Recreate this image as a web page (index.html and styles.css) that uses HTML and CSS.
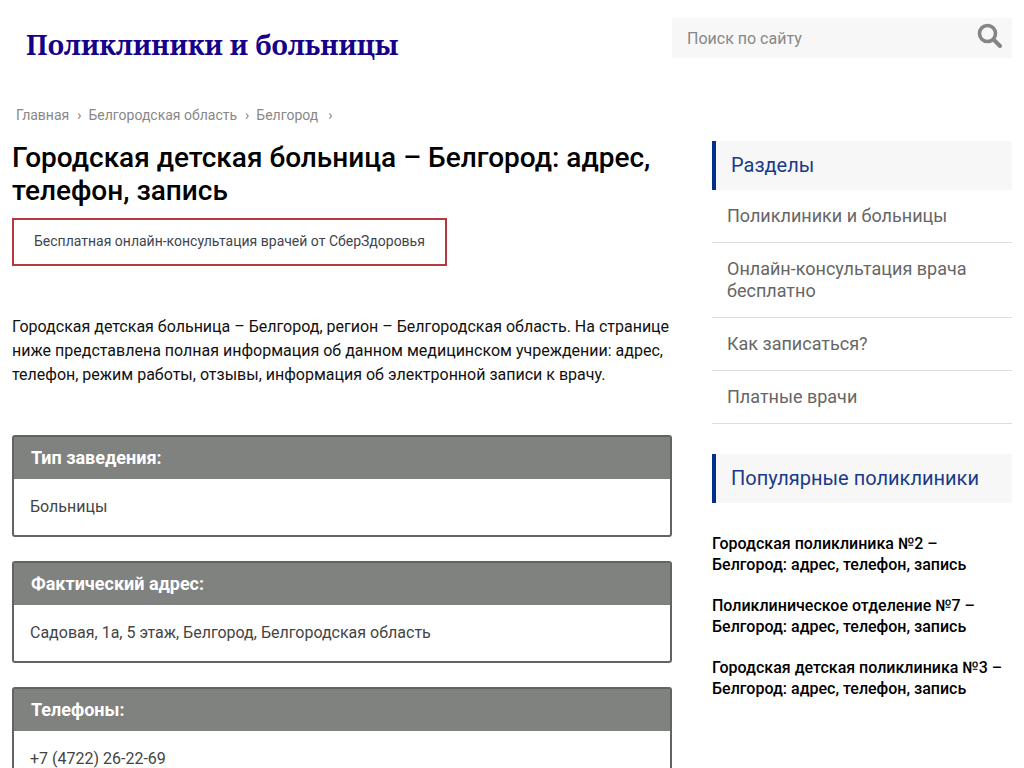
FILE: index.html
```html
<!DOCTYPE html>
<html lang="ru">
<head>
<meta charset="utf-8">
<meta name="viewport" content="width=device-width, initial-scale=1">
<title>Поликлиники и больницы</title>
<link rel="stylesheet" href="styles.css">
</head>
<body>
<div class="page">
  <header class="header">
    <a class="logo" href="#">Поликлиники и больницы</a>
    <form class="search" role="search">
      <input class="search-input" type="search" placeholder="Поиск по сайту" aria-label="Поиск по сайту">
      <button class="search-button" type="button" aria-label="Найти">
        <svg width="26" height="26" viewBox="0 0 26 26" fill="none" stroke="#858585" aria-hidden="true"><circle cx="10.5" cy="10.5" r="8" stroke-width="3.6"/><path d="M17 17l6 6" stroke-width="4" stroke-linecap="round"/></svg>
      </button>
    </form>
  </header>
  <div class="layout">
    <main class="content">
      <nav class="breadcrumbs" aria-label="Навигация">
        <a href="#">Главная</a><span class="sep">›</span><a href="#">Белгородская область</a><span class="sep">›</span><a href="#">Белгород</a><span class="sep last">›</span>
      </nav>
      <h1 class="title">Городская детская больница – Белгород: адрес, телефон, запись</h1>
      <a class="consult" href="#">Бесплатная онлайн-консультация врачей от СберЗдоровья</a>
      <p class="intro">Городская детская больница – Белгород, регион – Белгородская область. На странице ниже представлена полная информация об данном медицинском учреждении: адрес, телефон, режим работы, отзывы, информация об электронной записи к врачу.</p>
      <section class="card">
        <h2 class="card-title">Тип заведения:</h2>
        <p class="card-body">Больницы</p>
      </section>
      <section class="card">
        <h2 class="card-title">Фактический адрес:</h2>
        <p class="card-body">Садовая, 1а, 5 этаж, Белгород, Белгородская область</p>
      </section>
      <section class="card">
        <h2 class="card-title">Телефоны:</h2>
        <p class="card-body">+7 (4722) 26-22-69</p>
      </section>
    </main>
    <aside class="sidebar">
      <h2 class="side-title">Разделы</h2>
      <ul class="menu">
        <li><a href="#">Поликлиники и больницы</a></li>
        <li><a href="#">Онлайн-консультация врача бесплатно</a></li>
        <li><a href="#">Как записаться?</a></li>
        <li><a href="#">Платные врачи</a></li>
      </ul>
      <h2 class="side-title">Популярные поликлиники</h2>
      <ul class="popular">
        <li><a href="#">Городская поликлиника №2 – Белгород: адрес, телефон, запись</a></li>
        <li><a href="#">Поликлиническое отделение №7 – Белгород: адрес, телефон, запись</a></li>
        <li><a href="#">Городская детская поликлиника №3 – Белгород: адрес, телефон, запись</a></li>
      </ul>
    </aside>
  </div>
</div>
</body>
</html>
```
FILE: styles.css
```css
* { box-sizing: border-box; }
html { scrollbar-width: none; }
body { margin: 0; background: #fff; color: #111; font: 16px/24px Roboto, sans-serif; }
a { color: inherit; text-decoration: none; }
h1, h2, p, ul { margin: 0; padding: 0; }
ul { list-style: none; }
.page { padding: 18px 12px 0; }
.header { display: flex; justify-content: space-between; align-items: flex-start; }
.logo { padding: 8px 14px; color: #16008a; font: bold 27px/38px "Noto Serif", "DejaVu Serif", serif; }
.search { display: flex; width: 340px; height: 40px; background: #f7f7f7; }
.search-input { flex: 1; min-width: 0; border: 0; padding: 1px 15px 0; background: transparent; font: 16px/24px Roboto, sans-serif; color: #333; }
.search-input::placeholder { color: #888; opacity: 1; }
.search-button { display: flex; width: 44px; border: 0; padding: 5px 9px; background: transparent; cursor: pointer; }
.layout { display: grid; grid-template-columns: minmax(0, 1fr) 300px; gap: 40px; padding-top: 31px; }
.breadcrumbs { padding: 0 4px; color: #888; font-size: 14px; line-height: 24px; }
.sep { margin: 0 7px 0 8px; }
.last { margin-left: 10px; }
.title { margin: 14px 0 11px; color: #000; font-size: 28px; line-height: 33px; font-weight: 500; }
.consult { display: inline-block; border: 2px solid #b5393f; padding: 9px 20px 11px; font-size: 14px; line-height: 24px; color: #3f4450; }
.intro { margin: 49px 0 48px; }
.card { margin-bottom: 24px; border: 2px solid #626462; border-radius: 3px; }
.card-title { padding: 10px 17px; background: #80827f; color: #fff; font-size: 18px; line-height: 22px; font-weight: 700; }
.card-body { padding: 16px; color: #444; }
.sidebar { padding-top: 38px; }
.side-title { border-left: 4px solid #002f8c; padding: 12px 15px; background: #f7f7f7; color: #1a3a8a; font-size: 20px; line-height: 25px; font-weight: 400; }
.menu { margin-bottom: 30px; color: #666; font-size: 18px; line-height: 22px; }
.menu li { border-bottom: 1px solid #ddd; padding: 15px; }
.popular { display: grid; gap: 20px; padding-top: 30px; color: #000; font-weight: 500; line-height: 21px; }
```
